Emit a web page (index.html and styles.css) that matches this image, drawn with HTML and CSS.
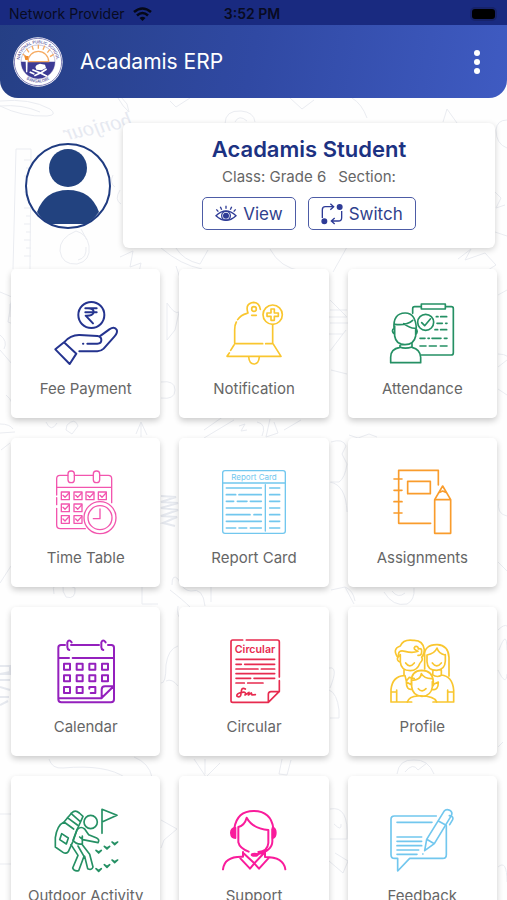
FILE: index.html
```html
<!DOCTYPE html>
<html lang="en">
  <head>
    <meta charset="UTF-8" />
    <meta name="viewport" content="width=device-width, initial-scale=1.0" />
    <title>Acadamis ERP</title>
    <link rel="stylesheet" href="styles.css">
  </head>
  <body>
    <!-- school doodles behind the content -->
    <svg class="doodles" viewBox="0 0 507 900" preserveAspectRatio="xMidYMin slice" aria-hidden="true">
      <path d="M0 101q30-3 50 8 8 6-3 7-25 1-47-10M0 106q22-2 40 6M118 98q5 9 11 14l-2-8-6-7M170 101l6 6 14-9M290 98l12 11 12-9M352 98q10 6 15 20" />
      <text transform="translate(133 126) rotate(-12) scale(-1 1)">bonjour</text>
      <path d="M225 124q0-14 16-13 13 1 14 11M235 122q4-8 12-1M443 122l4-13 10 14M507 120q-10 0-11 10 0 14 11 18M493 190l8 8-5 10 9-3M495 232l12 4" />
      <path d="M16 149h15l-1 120M16 149l-3 120M24 160h7M26 168h5M24 176h7M26 184h5M24 192h7M26 200h5M24 208h7M26 216h5M24 224h7M26 232h5M24 240h7M26 248h5M24 256h7" />
      <path d="M76 231q-17 7-16 20 2 14 17 13 14-3 12-18-2-12-13-15zM78 260q9-2 8-13M81 229l6 11M113 175q-4 8 2 12m5 3q-6 10 1 14M120 257l13-6-3 16 11-4-2 9" />
      <path d="M161 248q20 17 41 21M176 248q7 12 24 16l8-14M270 249q10 19 32 22M333 272l14-25M458 259l13-10-6 11 20-7 11 12-8 5" />
      <path d="M0 292l12 5-4 25 11 4M19 303l-9 1v13M0 335q8 6 4 14M0 350l12 14M6 395q9 7 6 18" />
      <path d="M167 303q8 12 12 9l-4 18-8 10zM161 382q14-2 14 8 0 10-14 8M176 266l4 12 13-9M204 430l20-14M330 300l17 17M330 310h17M329 317h18M330 323h18M329 334h14M330 351l16-21M331 370l16 4" />
      <path d="M498 295l9-5M498 354q13 0 11 9M498 367l9-7M498 389l9 6M0 424q10 0 13 5m-13 4 15-1M1 450l9-7M12 459v-12M46 422q5 11 11 1M67 425q8-8 11 1l-6 8-6-4zM136 434l5-12 6 13M141 423v14" />
      <path d="M204 438l30-18M239 426l6-2-4 7 6-1M257 422q10 2 5 14M270 419l-4 18 12-4-4-11M284 430l17-10" />
      <path d="M161 496l15 1-15 5 17 1-17 5 17 2-17 6 16 1-14 6 12 3" class="ink" />
      <path d="M331 442q12-4 15 4l-4 8 5 10q-2 14-8 18h-8M330 482q16 3 17 30M349 435l9 3 11-4 8 3M499 500q-3 14 8 16M498 562l9 9" />
      <path d="M0 583l11-17M54 594q-3-13 9-11l12 5q1 12-9 9-4-5-3-12M142 586v18h16M172 585q0-12 6-6 5 12 13 12 12-4 14 15M170 590q13 10 20 17M211 587v15M331 590l14-3 9 17M345 587q8 3 10 14M384 592q9 15 23 12 8-4 7-16M392 591q6 8 13 2" />
      <path d="M0 666h10v8H0M0 674l10-2M0 680h10M0 687l10 3M0 697h9M0 705l8-4" class="ink" />
      <path d="M178 606q-2 10 4 14M161 683q5 1 5-18 2-16 12-19M166 681q6-3 12 5M330 688q9-22-1-20M329 690q8 3 10 20v8h-9M499 650q8-22 8 0M498 630q6-6 9-4M498 670q8 17 9 4M498 747l5-5" />
      <path d="M49 759q3 10 14 9 43-4 63 10M134 757q15 6 18 20M194 759l12 18 14-14M205 759v15M282 759l-3 15 8 1 4-15M397 774q2-15 17-14 14-1 20 14M405 772q8-10 13-2l9-7M0 814h11M0 864h11M161 820l16 9-13 11-3 8M330 809q19-4 17 30h-17M334 824q8 8 7 0M329 861l14 12 5-12-13-8M498 867q9-8 9 15" />
    </svg>

    <header>
      <div class="status-bar">
        <div class="carrier">
          Network Provider
          <svg width="19" height="14" viewBox="0 0 19 14" aria-hidden="true">
            <path d="M1 5q8.500-7 17 0M4 8.500q5.500-5 11 0" fill="none" stroke="#050817" stroke-width="2.600" />
            <path d="M6.500 11q3-2.500 6 0l-3 3z" fill="#050817" />
          </svg>
        </div>
        <div class="clock">3:52 PM</div>
        <div class="battery-wrap"><span class="battery"></span></div>
      </div>
      <div class="app-bar">
        <svg class="logo" viewBox="0 0 150 150" role="img" aria-label="National Public School">
          <defs>
            <path id="arcTop" d="M19 75a56 56 0 0 1 112 0" />
            <path id="arcBottom" d="M13 75a62 62 0 0 0 124 0" />
          </defs>
          <circle cx="75" cy="75" r="74" fill="#fff" />
          <circle cx="75" cy="75" r="71" fill="none" stroke="#8583b8" stroke-width="3" />
          <circle cx="75" cy="75" r="51" fill="#fff" stroke="#aaa6cb" stroke-width="2" />
          <path d="M24 74h102a51 51 0 0 1-102 0z" fill="#3d3b94" />
          <path d="M45 74a31 31 0 0 1 62 0z" fill="#fff" stroke="#f6ab62" stroke-width="4" />
          <path d="M39 58l-10-7M48 46l-8-11M61 38l-4-11M76 35V23M90 38l5-12M103 47l8-10M111 59l11-7" stroke="#f6ab62" stroke-width="4" />
          <path d="M34 57h13l-3 12h-7z" fill="#ee8b2c" />
          <path d="M38 70h6l-1 36h-4z" fill="#fff" />
          <path d="M71 84l10-4 15 3 3 10-13 7-16-2-3-8z" fill="#fff" />
          <path d="M58 98l25 10 18-12M64 116l18-8 20 10M50 105l14 6" fill="none" stroke="#fff" stroke-width="5" />
          <text class="seal"><textPath href="#arcTop" startOffset="50%">NATIONAL PUBLIC SCHOOL</textPath></text>
          <text class="seal"><textPath href="#arcBottom" startOffset="50%">BANGALORE</textPath></text>
        </svg>
        <h1>Acadamis ERP</h1>
        <button class="menu" aria-label="Menu">
          <svg width="8" height="24" viewBox="0 0 8 24" fill="#fff" aria-hidden="true">
            <circle cx="4" cy="3" r="3" /><circle cx="4" cy="12" r="3" /><circle cx="4" cy="21" r="3" />
          </svg>
        </button>
      </div>
    </header>

    <main>
      <section class="student">
        <svg class="avatar" viewBox="0 0 86 86" role="img" aria-label="Student photo">
          <circle cx="43" cy="43" r="42" fill="#fff" stroke="#1f3b80" stroke-width="2" />
          <circle cx="43" cy="25" r="19" fill="#22427f" />
          <path d="M12 69q8-22 31-22t31 22q-6 8-13 12H25q-8-4-13-12z" fill="#22427f" />
        </svg>
        <div class="student-card">
          <h2>Acadamis Student</h2>
          <p><span>Class: Grade 6</span><span>Section:</span></p>
          <div class="actions">
            <button>
              <svg width="22" height="22" viewBox="0 0 66 66" aria-hidden="true">
                <path d="M3 38Q33 10 63 38 33 66 3 38zM33 17V8M20 20l-4-9M46 20l4-9M10 26l-6-7M56 26l6-7" />
                <circle cx="33" cy="38" r="13" />
                <circle cx="33" cy="38" r="7" class="solid" />
              </svg>
              View
            </button>
            <button>
              <svg width="22" height="22" viewBox="0 0 66 66" aria-hidden="true">
                <path d="M4 45V20q0-9 9-9h24M28 2l10 9-10 9M62 24v20q0 10-10 10H32M41 45l-10 9 10 9" />
                <circle cx="56" cy="12" r="7" class="solid" />
                <circle cx="10" cy="55" r="7" class="solid" />
              </svg>
              Switch
            </button>
          </div>
        </div>
      </section>

      <nav class="grid">
        <a href="#" class="tile navy">
          <svg viewBox="160 125 192 192" aria-hidden="true">
            <circle cx="272" cy="167" r="39" />
            <path d="M254 147h34M254 159h34M262 147q17 1 17 11 0 12-24 11l22 23" />
            <path d="M190 249q20-23 47-22l53 3q12 1 12 12 0 11-12 11h-30M247 253h1M296 232l30-22q15-10 22 1 4 9-7 21l-32 36q-8 8-19 8h-54M190 249l37 34-20 31-43-44z" />
          </svg>
          Fee Payment
        </a>
        <a href="#" class="tile yellow">
          <svg viewBox="666 125 192 192" aria-hidden="true">
            <circle cx="762" cy="149" r="7" />
            <path d="M744 161q-10-29 17-32 17 1 20 21M741 162q-19 5-28 19M709 188q-5 9-5 23v40M818 196v55M704 253h84M797 253h22l24 38H681l7-10M692 273l10-16M746 293q2 21 16 21t16-21M755 168h14" />
            <circle cx="818" cy="166" r="29" />
            <path d="M813 149h10v12h12v10h-12v12h-10v-12h-12v-10h12z" />
          </svg>
          Notification
        </a>
        <a href="#" class="tile green">
          <svg viewBox="422 125 192 192" aria-hidden="true">
            <path d="M490 162v-14q0-6 6-6h20M588 142h18q6 0 6 6v132q0 7-7 7h-89M516 134h72v15h-72z" />
            <circle cx="529" cy="189" r="24" />
            <path d="M517 190l9 9 17-20M561 172h5M574 172h18M563 192h16M589 192h4M557 211h8M574 211h18M512 237h15M536 237h4M548 237h27M585 237h8M512 260h18M540 260h21M573 260h20" />
            <path d="M434 207q-3-45 33-46 31-1 34 45M437 195q36 4 53-12M463 193q23 17 38 13M436 201v29q4 26 31 26t32-26v-24M435 207q-12 6 1 18M499 208q9 6 0 18M452 252v12q-29 5-28 30v16h90v-16q-1-24-26-30v-12M451 263q16 7 37 0" />
          </svg>
          Attendance
        </a>

        <a href="#" class="tile pink thin">
          <svg viewBox="160 122 192 192" aria-hidden="true">
            <path d="M201 138h-23q-10 0-10 10v49M168 205v21M168 237v50q0 11 11 11h75M221 138h57M298 138h25q10 0 10 10v72M168 174h165" />
            <rect x="202" y="125" width="19" height="35" rx="9" />
            <rect x="278" y="125" width="19" height="35" rx="9" />
            <path d="M182 188h24v23h-24zM220 188h24v23h-24zM256 188h24v23h-24zM293 188h24v23h-24zM182 224h24v23h-24zM220 224h24v23h-24zM182 259h24v23h-24zM220 259h24v23h-24z" />
            <path d="M187 198l6 6 12-13M225 198l6 6 12-13M261 198l6 6 12-13M298 198l6 6 12-13M187 234l6 6 12-13M225 234l6 6 12-13M187 269l6 6 12-13M225 269l6 6 12-13" />
            <circle cx="298" cy="265" r="48" fill="#fff" />
            <circle cx="298" cy="265" r="36" />
            <path d="M298 239v29h-20" />
          </svg>
          Time Table
        </a>
        <a href="#" class="tile sky thin">
          <svg viewBox="666 122 192 192" aria-hidden="true">
            <rect x="668" y="124" width="188" height="188" rx="7" />
            <path d="M668 161h188M796 166v139" />
            <path d="M679 176h105M679 196h28M717 196h67M679 216h22M712 216h29M751 216h33M679 236h105M679 256h71M762 256h22M679 276h105M679 296h28M717 296h23M751 296h33M809 176h30M809 196h30M809 216h30M809 236h30M809 256h30M809 276h30M809 296h30" class="strong" />
            <text x="762" y="151" class="caption-small">Report Card</text>
          </svg>
          Report Card
        </a>
        <a href="#" class="tile orange">
          <svg viewBox="422 122 192 192" aria-hidden="true">
            <path d="M567 167v-44H448v159h96M434 149h24M434 183h24M434 217h24M434 251h24M475 156h68v37h-68zM556 211l24-41 24 41v101h-48zM556 211h48M568 190l12-5 12 5" />
          </svg>
          Assignments
        </a>

        <a href="#" class="tile purple">
          <svg viewBox="160 131 192 192" aria-hidden="true">
            <path d="M193 149h-12q-8 0-8 8v155q0 9 9 9h149q9 0 9-9V157q0-8-8-8h-10M211 149h84M173 188h32M216 188h124M213 141q-8-11-13 0v15q0 6 6 8M315 141q-8-11-13 0v15q0 6 6 8M174 309h128l37-36h-26q-10 0-10 10v26" />
            <path d="M190 205h18v18h-18zM228 205h18v18h-18zM266 205h18v18h-18zM304 205h18v18h-18zM190 240h18v18h-18zM228 240h18v18h-18zM266 240h18v18h-18zM304 240h18v18h-18zM190 275h18v18h-18zM228 275h18v18h-18zM266 280v-5h18v18h-14" />
          </svg>
          Calendar
        </a>
        <a href="#" class="tile red">
          <svg viewBox="666 131 192 192" aria-hidden="true">
            <path d="M728 134h-30q-5 0-5 5v177q0 5 5 5h107l33-33v-32M739 134h93q6 0 6 6v105M805 320v-23q0-8 8-8h25" />
            <path d="M708 192h116M708 207h16M734 207h90M708 221h66M784 221h40M708 235h116M708 249h44M762 249h62M708 263h25M743 263h46" />
            <path d="M736 281q-13-8-13 15-1 12-12 7-3-9 15-12 14-3 9 8l12-8-2 8 9-6 2 6 10-1" />
            <text x="765" y="174" class="caption">Circular</text>
          </svg>
          Circular
        </a>
        <a href="#" class="tile yellow">
          <svg viewBox="422 131 192 192" aria-hidden="true">
            <path d="M446 187q-19-26 7-35 9-21 38-17 30-2 34 28 1 13-8 23M448 183q-4-21 19-15 22 6 39 0-17-7-9-14 10-3 10 7 11-4 10 8 0 12-11 11M453 178v22q2 26 30 26 21-1 28-21M446 185q-6 10 7 16M517 185q5 9-4 17M464 224v17q-35 2-39 42v37h62M442 284v35M425 290h17M467 241l4 16 9-11 15 4" />
            <path d="M525 184q-1-37 39-36 33 2 35 38v56M533 179q23-4 30-21 5 17 24 21M533 180v19q1 26 29 26 25-2 26-28v-19M526 178v43M551 224l-1 14M576 224v15q33 3 37 45v36h-62M595 284v35M595 290h18M549 238q14 10 27 2" />
            <path d="M486 270v-12q0-32 31-33 33 0 35 34v12M489 255q25-1 27-20 9 16 33 15M487 260v14q3 28 31 29 27-1 31-28v-16M486 268l-15-8q0 25 17 22M550 268l17-8q0 27-18 22M474 320q5-17 32-18 48-2 56 18M507 280q11 13 23 0M469 203q12 17 26 0M549 203q13 17 27 0" />
          </svg>
          Profile
        </a>

        <a href="#" class="tile green">
          <svg viewBox="160 142 192 192" aria-hidden="true">
            <circle cx="270" cy="184" r="20" />
            <path d="M304 218v-72l45 18-45 20M190 184l23-27q10-11 23 0l11 10-17 38-13 37-14 31q-7 8-16 2l-23-16v-28q5-37 26-47zM190 184l29 21M200 171l30 22M211 158l27 24M183 219l20 13-6 18-20-13z" />
            <path d="M232 205q9-9 20 0l12 17 24 10q10 5 4 14l-46-9-9-8M229 207l-12 32q10 14 28 11v-24M211 252l21 32-16 38q4 11 18 8l16-43-18-31M245 252l22 29 10 38q-4 11-16 5l-9-37" />
            <path d="M286 269l8 5 8-5-8 8zM311 257l8 5 8-5-8 8zM334 244l8 5 9-5-9 8zM286 324l8 5 8-5-8 8zM311 312l8 5 8-5-8 8zM334 298l8 5 9-5-9 8z" />
          </svg>
          Outdoor Activity
        </a>
        <a href="#" class="tile magenta">
          <svg viewBox="666 142 192 192" aria-hidden="true">
            <path d="M703 203q8-52 58-52 52 0 59 52M715 245v-46q19-5 25-28 18 33 65 37v39q-2 25-30 27M715 245q4 18 31 28M817 206v37q-1 27-45 38M795 271v18q56 0 61 37M729 274v14q-56-2-60 38M729 276l34 32-13 16-29-31M795 274l-32 34 14 16 28-31" />
            <path d="M706 201q-13 2-13 16 1 15 13 15zM818 201q9 3 9 15 0 14-9 16z" fill="currentColor" />
            <ellipse cx="764" cy="282" rx="9" ry="3" />
          </svg>
          Support
        </a>
        <a href="#" class="tile sky">
          <svg viewBox="422 142 192 192" aria-hidden="true">
            <path d="M561 166H435q-10 0-10 10v106q0 11 11 11h9v38l36-38h99q11 0 11-11v-87M443 185h105M443 229h74M443 242h74M443 255h74M443 268h65M443 281h60" />
            <path d="M526 270l6-34 52-84q7-9 17-3t5 16l-51 84zM532 236l23 13M567 181l22 12M600 165q14 2 10 12l-9 15M520 280h1" />
          </svg>
          Feedback
        </a>
      </nav>
    </main>
  </body>
</html>
```

FILE: styles.css
```css
* {
  box-sizing: border-box;
}
html {
  scrollbar-width: none;
}
body {
  position: relative;
  margin: 0;
  overflow-x: hidden;
  background-color: #fefefe;
  color: #666;
  font-family: "Inter", "Liberation Sans", sans-serif;
}
h1,
h2,
p {
  margin: 0;
}
button {
  font-family: inherit;
  cursor: pointer;
}
.doodles {
  position: absolute;
  top: 0;
  left: 0;
  z-index: -1;
  width: 100%;
  fill: none;
  stroke: #eaecf1;
  stroke-width: 1;
}
.doodles .ink {
  stroke: #e6e9ef;
  stroke-width: 2;
}
.doodles text {
  fill: #e6e9f1;
  stroke: none;
  font: italic 22px "Liberation Serif", serif;
}

/* header */
header {
  overflow: hidden;
  border-radius: 0 0 18px 18px;
  background: linear-gradient(100deg, #253f84, #3049a3 50%, #3f5bc2);
}
.status-bar {
  display: grid;
  grid-template-columns: 1fr auto 1fr;
  align-items: center;
  height: 25px;
  padding: 2px 12px 0 9px;
  background-color: #192a80;
  color: #080b22;
  font-size: 14px;
}
.carrier {
  display: flex;
  align-items: center;
  gap: 8px;
  white-space: nowrap;
}
.clock {
  font-weight: 600;
}
.battery-wrap {
  display: flex;
  justify-content: flex-end;
}
.battery {
  width: 23px;
  height: 10px;
  border-radius: 3px;
  background-color: #000;
  box-shadow: 0 0 0 2px #17236a;
}
.app-bar {
  display: flex;
  align-items: center;
  height: 73px;
  padding: 0 18px 0 13px;
}
.logo {
  width: 50px;
  height: 50px;
  margin-right: 17px;
}
.seal {
  fill: #6a67a8;
  font-size: 12px;
  font-weight: 600;
  text-anchor: middle;
}
h1 {
  flex: 1;
  color: #fff;
  font-size: 21px;
  font-weight: 400;
}
.menu {
  display: flex;
  justify-content: center;
  width: 24px;
  padding: 0;
  border: none;
  background: none;
}

/* student */
main {
  padding: 25px 10px 20px 11px;
}
.student {
  display: flex;
  align-items: center;
  gap: 12px;
  padding: 0 2px 0 14px;
  margin-bottom: 21px;
}
.avatar {
  flex: none;
  width: 86px;
  height: 86px;
}
.student-card {
  flex: 1;
  padding: 12px 10px 18px;
  border-radius: 6px;
  background-color: #fff;
  box-shadow: 0 2px 6px rgba(0, 0, 0, 0.18);
  text-align: center;
}
h2 {
  color: #1c3282;
  font-size: 22px;
  font-weight: 600;
  line-height: 28px;
}
.student-card p {
  display: flex;
  justify-content: center;
  gap: 12px;
  margin: 4px 0 10px;
  font-size: 15px;
  line-height: 20px;
}
.actions {
  display: flex;
  justify-content: center;
  gap: 12px;
}
.actions button {
  display: flex;
  align-items: center;
  gap: 6px;
  height: 33px;
  padding: 0 12px;
  border: 1px solid #4d5ca6;
  border-radius: 5px;
  background-color: #fff;
  color: #2f3f8d;
  font-size: 17px;
}
.actions svg {
  fill: none;
  stroke: #2e3b96;
  stroke-width: 4;
}
.actions .solid {
  fill: #2e3b96;
}

/* tiles */
.grid {
  display: grid;
  grid-template-columns: repeat(3, 1fr);
  gap: 20px 19px;
}
.tile {
  display: flex;
  flex-direction: column;
  align-items: center;
  gap: 12px;
  padding: 32px 4px 17px;
  border-radius: 5px;
  background-color: #fff;
  box-shadow: 0 3px 6px rgba(0, 0, 0, 0.2);
  color: #666;
  font-size: 15px;
  line-height: 24px;
  text-decoration: none;
  white-space: nowrap;
}
.tile svg {
  width: 64px;
  height: 64px;
  overflow: visible;
  fill: none;
  stroke: currentColor;
  stroke-width: 5;
  stroke-linecap: round;
  stroke-linejoin: round;
}
.thin svg {
  stroke-width: 4;
}
.tile .strong {
  stroke-width: 5;
}
.tile svg text {
  fill: currentColor;
  stroke: none;
  text-anchor: middle;
}
.caption {
  font-size: 32px;
  font-weight: 600;
}
.caption-small {
  font-size: 24px;
}
.navy svg {
  color: #25348f;
  stroke-width: 6;
}
.yellow svg {
  color: #f9c62f;
}
.green svg {
  color: #259064;
}
.pink svg {
  color: #f255ae;
}
.sky svg {
  color: #72c7ee;
}
.orange svg {
  color: #f99c2c;
}
.purple svg {
  color: #9420bd;
  stroke-width: 6;
}
.red svg {
  color: #e72b4f;
}
.magenta svg {
  color: #f91c9b;
  stroke-width: 6;
}
```
